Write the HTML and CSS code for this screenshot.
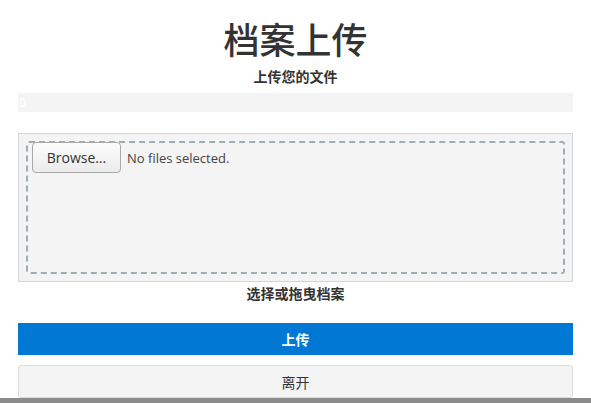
FILE: index.html
```html
<!DOCTYPE html>
<html lang="zh-CN">
<head>
<meta charset="utf-8">
<title>档案上传</title>
<link rel="stylesheet" href="styles.css">
</head>
<body>
<div class="page">
  <h1 class="title">档案上传</h1>
  <p class="subtitle">上传您的文件</p>
  <div class="progress"><span class="progress-label">0</span></div>
  <div class="dropzone">
    <div class="dropzone-inner">
      <div class="file-picker">
        <span class="browse-btn">Browse…</span>
        <span class="file-status">No files selected.</span>
      </div>
    </div>
  </div>
  <p class="caption">选择或拖曳档案</p>
  <button class="btn btn-primary" type="button">上传</button>
  <button class="btn btn-secondary" type="button">离开</button>
</div>
<div class="footer"></div>
</body>
</html>
```

FILE: styles.css
```css
html, body {
  margin: 0;
  padding: 0;
  overflow: hidden;
  background: #fff;
}

body {
  font-family: "Open Sans", "Noto Sans CJK SC", sans-serif;
  color: #333;
}

.page {
  padding: 0 18px;
  display: flex;
  flex-direction: column;
}

.title {
  margin: 18px 0 0;
  font-family: "Noto Sans CJK SC", sans-serif;
  font-size: 36px;
  font-weight: 500;
  line-height: 40px;
  text-align: center;
  color: #333;
}

.subtitle {
  margin: 9px 0 0;
  font-family: "Noto Sans CJK SC", sans-serif;
  font-size: 14px;
  font-weight: 700;
  line-height: 18px;
  text-align: center;
}

.progress {
  margin-top: 8px;
  height: 19px;
  background: #f4f4f4;
  display: flex;
  align-items: center;
}

.progress-label {
  color: #fff;
  font-size: 12px;
  line-height: 19px;
  padding-left: 1px;
}

.dropzone {
  margin-top: 21px;
  height: 149px;
  box-sizing: border-box;
  border: 1px solid #d3d6dc;
  background: #f4f4f4;
  padding: 7px;
}

.dropzone-inner {
  height: 100%;
  box-sizing: border-box;
  border: 2px dashed #9ab0b5;
  border-radius: 3px;
  padding: 0 4px;
}

.file-picker {
  display: flex;
  align-items: center;
  gap: 6px;
  margin-top: -1px;
}

.browse-btn {
  display: inline-flex;
  align-items: center;
  justify-content: center;
  box-sizing: border-box;
  width: 89px;
  height: 31px;
  border: 1px solid #a9a9a9;
  border-radius: 4px;
  background: linear-gradient(#fdfdfd, #ebebeb);
  font-size: 14px;
  color: #333;
}

.file-status {
  font-size: 13px;
  color: #444;
}

.caption {
  margin: 2px 0 0;
  font-family: "Noto Sans CJK SC", sans-serif;
  font-size: 14px;
  font-weight: 700;
  line-height: 18px;
  text-align: center;
}

.btn {
  display: block;
  width: 100%;
  box-sizing: border-box;
  font-family: "Noto Sans CJK SC", sans-serif;
  font-size: 14px;
  cursor: pointer;
}

.btn-primary {
  margin-top: 21px;
  height: 32px;
  border: none;
  background: #0078d4;
  color: #fff;
  font-weight: 700;
}

.btn-secondary {
  margin-top: 10px;
  height: 33px;
  border: 1px solid #dcdcdc;
  border-radius: 3px;
  background: #f4f4f4;
  color: #333;
}

.footer {
  height: 5px;
  background: #8a8a8a;
}
```
